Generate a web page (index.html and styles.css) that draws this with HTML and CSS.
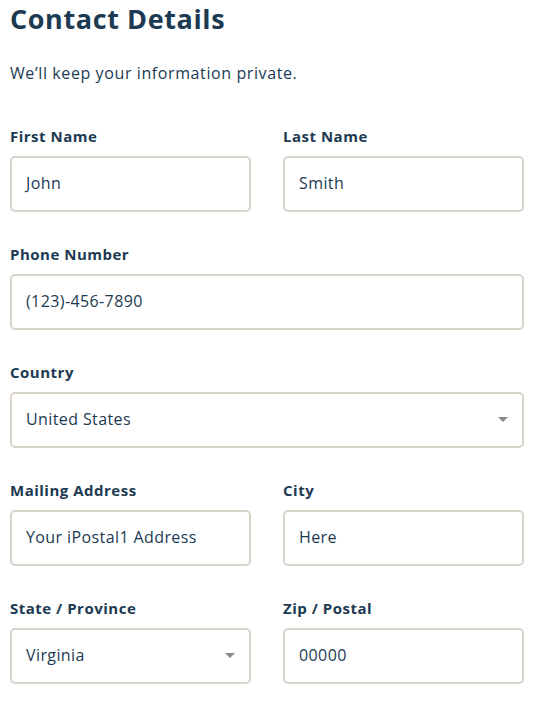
FILE: index.html
```html
<!DOCTYPE html>
<html>
<head>
<meta charset="utf-8">
<link rel="stylesheet" href="styles.css">
</head>
<body>
<div class="page">
  <h1 class="title">Contact Details</h1>
  <p class="subtitle">We’ll keep your information private.</p>
  <div class="grid">
    <div class="field">
      <label class="label">First Name</label>
      <div class="input">John</div>
    </div>
    <div class="field">
      <label class="label">Last Name</label>
      <div class="input">Smith</div>
    </div>
    <div class="field full">
      <label class="label">Phone Number</label>
      <div class="input">(123)-456-7890</div>
    </div>
    <div class="field full">
      <label class="label">Country</label>
      <div class="input select">United States<span class="caret"></span></div>
    </div>
    <div class="field">
      <label class="label">Mailing Address</label>
      <div class="input">Your iPostal1 Address</div>
    </div>
    <div class="field">
      <label class="label">City</label>
      <div class="input">Here</div>
    </div>
    <div class="field">
      <label class="label">State / Province</label>
      <div class="input select">Virginia<span class="caret"></span></div>
    </div>
    <div class="field">
      <label class="label">Zip / Postal</label>
      <div class="input">00000</div>
    </div>
  </div>
</div>
</body>
</html>
```
FILE: styles.css
```css
html, body {
  margin: 0;
  padding: 0;
  background: #ffffff;
}
.page {
  width: 514px;
  padding-left: 10px;
  font-family: "Open Sans", "Noto Sans", sans-serif;
  color: #1c3a52;
}
.title {
  margin: 0;
  padding-top: 2px;
  font-size: 27px;
  line-height: 34px;
  font-weight: 700;
  letter-spacing: 0.6px;
  color: #1c3a52;
}
.subtitle {
  margin: 0;
  padding-top: 26px;
  font-size: 16px;
  line-height: 22px;
  letter-spacing: 0.6px;
  color: #1c3a52;
}
.grid {
  display: grid;
  grid-template-columns: 241px 241px;
  column-gap: 32px;
  padding-top: 42px;
}
.full {
  grid-column: 1 / span 2;
}
.field {
  display: flex;
  flex-direction: column;
  margin-bottom: 32px;
}
.label {
  font-size: 15px;
  line-height: 20px;
  font-weight: 700;
  letter-spacing: 0.5px;
  margin-bottom: 10px;
}
.input {
  box-sizing: border-box;
  height: 56px;
  border: 2px solid #d9d3cb;
  border-radius: 5px;
  padding: 0 14px 2px;
  display: flex;
  align-items: center;
  justify-content: space-between;
  font-size: 16px;
  letter-spacing: 0.4px;
  color: #1c3a52;
}
.caret {
  width: 0;
  height: 0;
  border-left: 5px solid transparent;
  border-right: 5px solid transparent;
  border-top: 5px solid #8a8a8a;
  margin-right: 0;
}
```
